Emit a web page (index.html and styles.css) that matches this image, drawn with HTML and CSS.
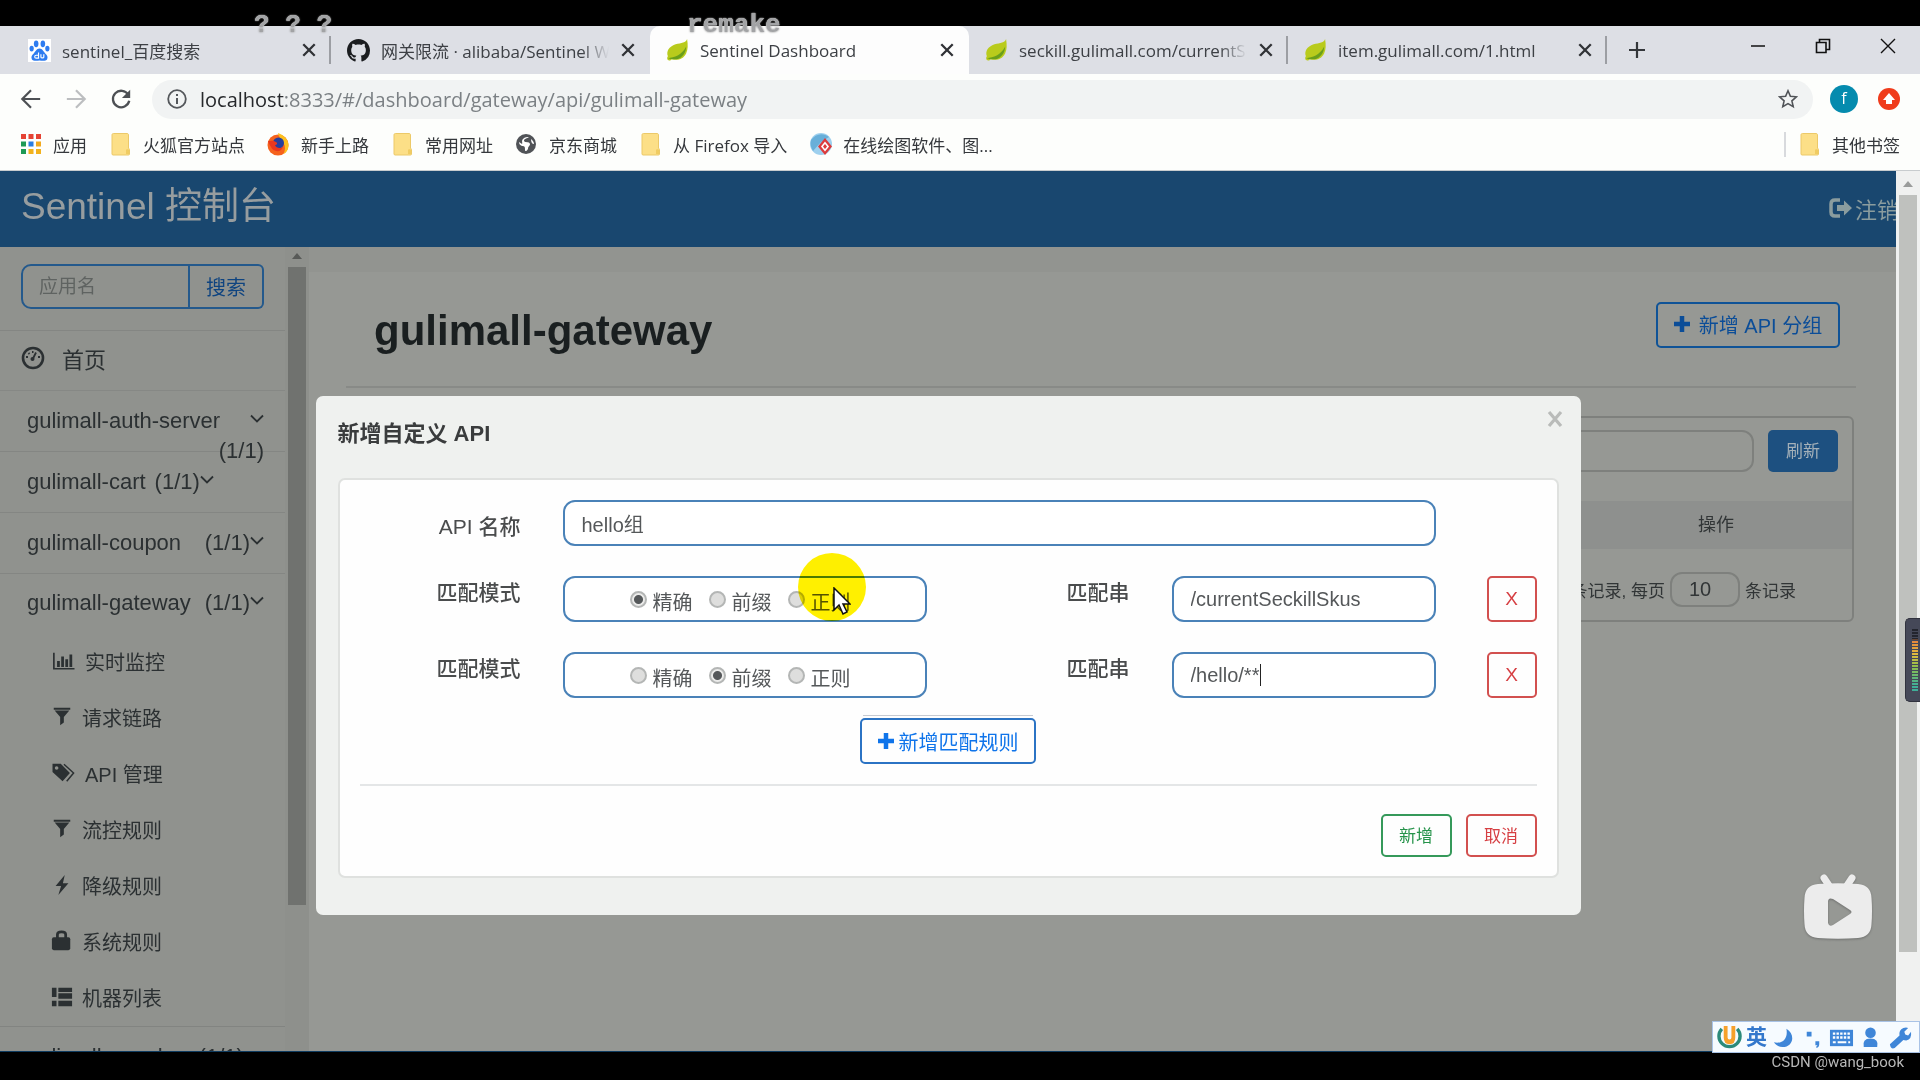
FILE: index.html
```html
<!DOCTYPE html>
<html lang="zh-CN">
<head>
  <meta charset="UTF-8" />
  <title>Sentinel Dashboard</title>
  <link rel="stylesheet" href="styles.css">
</head>
<body>

  <!-- shared icons -->
  <svg class="sprite" aria-hidden="true">
    <symbol id="leaf" viewBox="0 0 24 24">
      <path d="M22 0c-1 4-6 4-12 5.500C3 8 0 13 2 18c-1 1-1 3 0 4 1 .8 3 .6 4-1 6 2 12 0 15-6 2-4 2-9 1-15z" fill="#b9cb1c"/>
      <path d="M2 20c7-1 14-3 19-12 0 6-4 12-10 13-4 .6-7-.5-9-1z" fill="#6a9f1b"/>
    </symbol>
    <symbol id="folder" viewBox="0 0 24 24">
      <path d="M3 3c0-1 .5-1.500 1.500-1.500H18c1 0 1.500.5 1.500 1.500v13l1 1.500V22c0 .6-.4 1-1 1H4c-.6 0-1-.4-1-1z" fill="#fcdf87" stroke="#ecc968"/>
      <path d="M17 22v-4c0-1 3-1 3 0v4z" fill="#f0cc62"/>
    </symbol>
    <symbol id="cross" viewBox="0 0 14 14">
      <path d="M2 2l10 10M12 2L2 12" stroke="currentColor" stroke-width="2" fill="none"/>
    </symbol>
    <symbol id="chevron" viewBox="0 0 14 10">
      <path d="M1 1.500l6 6 6-6" stroke="currentColor" stroke-width="1.800" fill="none"/>
    </symbol>
    <symbol id="plus" viewBox="0 0 16 16">
      <path d="M8 0v16M0 8h16" stroke="currentColor" stroke-width="4.500"/>
    </symbol>
    <symbol id="filter" viewBox="0 0 24 24">
      <path d="M3 2h18v2H3zM4 5h16l-6 7v6l-4 3v-9z" fill="currentColor"/>
    </symbol>
  </svg>

  <div class="window">
    <div class="tab-strip">
      <div class="tab">
        <svg class="favicon" viewBox="0 0 24 24"><path fill="#fff" d="M0 0h24v24H0z"/><g fill="#2e7cf0"><ellipse cx="8.500" cy="5" rx="2.400" ry="3.500"/><ellipse cx="15.500" cy="5" rx="2.400" ry="3.500"/><ellipse cx="3.800" cy="10" rx="2.200" ry="3"/><ellipse cx="20.200" cy="10" rx="2.200" ry="3"/><path d="M12 10c-3 0-4 3-6 5s-3 3-2 6c1 2 4 2 8 1.500 4 .5 7 .5 8-1.500 1-3 0-4-2-6s-3-5-6-5z"/></g><path d="M11 14v6H8.500a1.500 1.500 0 010-3H11M13.500 16v3c0 1 3 1 3 0v-3" stroke="#fff" stroke-width="1.200" fill="none"/></svg>
        <span class="tab-title">sentinel_百度搜索</span>
        <button class="tab-close" aria-label="关闭"><svg><use href="#cross"/></svg></button>
      </div>
      <div class="tab before-active">
        <svg class="favicon" viewBox="0 0 16 16"><path d="M8 0C3.580 0 0 3.580 0 8c0 3.540 2.290 6.530 5.470 7.590.4.070.55-.17.55-.38 0-.19-.01-.82-.01-1.490-2.010.37-2.530-.49-2.690-.94-.09-.23-.48-.94-.82-1.130-.28-.15-.68-.52-.01-.53.63-.01 1.080.58 1.230.82.72 1.210 1.870.87 2.330.66.070-.52.28-.87.51-1.070-1.780-.2-3.640-.89-3.640-3.950 0-.87.31-1.590.82-2.150-.08-.2-.36-1.020.08-2.120 0 0 .67-.21 2.200.82.64-.18 1.320-.27 2-.27s1.360.09 2 .27c1.530-1.040 2.200-.82 2.200-.82.44 1.100.16 1.920.08 2.120.51.56.82 1.270.82 2.150 0 3.070-1.870 3.750-3.650 3.950.29.25.54.73.54 1.480 0 1.070-.01 1.930-.01 2.200 0 .21.15.46.55.38A8.010 8.010 0 0016 8c0-4.420-3.580-8-8-8z" fill="#1b1d20"/></svg>
        <span class="tab-title faded">网关限流 · alibaba/Sentinel Wiki</span>
        <button class="tab-close" aria-label="关闭"><svg><use href="#cross"/></svg></button>
      </div>
      <div class="tab active">
        <svg class="favicon"><use href="#leaf"/></svg>
        <span class="tab-title">Sentinel Dashboard</span>
        <button class="tab-close" aria-label="关闭"><svg><use href="#cross"/></svg></button>
      </div>
      <div class="tab">
        <svg class="favicon"><use href="#leaf"/></svg>
        <span class="tab-title faded">seckill.gulimall.com/currentSeckillSkus</span>
        <button class="tab-close" aria-label="关闭"><svg><use href="#cross"/></svg></button>
      </div>
      <div class="tab">
        <svg class="favicon"><use href="#leaf"/></svg>
        <span class="tab-title">item.gulimall.com/1.html</span>
        <button class="tab-close" aria-label="关闭"><svg><use href="#cross"/></svg></button>
      </div>
      <button class="new-tab" aria-label="新标签页"><svg viewBox="0 0 18 18"><path d="M9 1v16M1 9h16" stroke="#33363a" stroke-width="2.200"/></svg></button>
      <div class="window-controls">
        <button aria-label="最小化"><svg viewBox="0 0 16 16"><path d="M1 8h14" stroke="#111" stroke-width="1.500"/></svg></button>
        <button aria-label="还原"><svg viewBox="0 0 16 16"><path d="M1.500 4.500h9.500v10H1.500zM4.500 4V1.500h10v10H11.500" stroke="#111" stroke-width="1.600" fill="none"/></svg></button>
        <button aria-label="关闭窗口"><svg viewBox="0 0 16 16"><path d="M1 1l14 14M15 1L1 15" stroke="#111" stroke-width="1.400"/></svg></button>
      </div>
    </div>

    <div class="toolbar">
      <button class="nav-btn" aria-label="后退"><svg viewBox="0 0 24 24"><path d="M22 12H3M12 2.500L2.500 12l9.500 9.500" stroke="#4d5054" stroke-width="2.400" fill="none"/></svg></button>
      <button class="nav-btn" aria-label="前进"><svg viewBox="0 0 24 24"><path d="M2 12h19M12 2.500l9.500 9.500-9.500 9.500" stroke="#bcbec0" stroke-width="2.400" fill="none"/></svg></button>
      <button class="nav-btn" aria-label="重新加载"><svg viewBox="0 0 24 24"><path d="M20 7.500A9 9 0 1021 14" stroke="#4d5054" stroke-width="2.500" fill="none"/><path d="M22 2v9h-9z" fill="#4d5054"/></svg></button>
      <div class="address-bar">
        <svg class="info-icon" viewBox="0 0 20 20"><circle cx="10" cy="10" r="8.800" stroke="#54575b" stroke-width="1.800" fill="none"/><path d="M10 9v6M10 5v2" stroke="#54575b" stroke-width="2"/></svg>
        <span class="url"><b>localhost</b>:8333/#/dashboard/gateway/api/gulimall-gateway</span>
        <svg class="star-icon" viewBox="0 0 20 20"><path d="M10 1.800l2.400 5.500 6 .5-4.500 4 1.300 5.900-5.200-3.100-5.200 3.100 1.300-5.900-4.500-4 6-.5z" stroke="#505357" stroke-width="1.600" fill="none"/></svg>
      </div>
      <span class="avatar">f</span>
      <svg class="update-icon" viewBox="0 0 22 22"><circle cx="11" cy="11" r="11" fill="#f03c1c"/><path d="M11 5l6 7h-3v4H8v-4H5z" fill="#fff"/></svg>
    </div>

    <div class="bookmarks">
      <a href="#"><svg viewBox="0 0 24 24"><path d="M2 2h5v5H2zM9.500 2h5v5h-5zM17 2h5v5h-5z" fill="#e54334"/><path d="M2 9.500h5v5H2z" fill="#1d9a56"/><path d="M9.500 9.500h5v5h-5z" fill="#2a7de1"/><path d="M17 9.500h5v5h-5z" fill="#f2a91d"/><path d="M2 17h5v5H2z" fill="#1d9a56"/><path d="M9.500 17h5v5h-5zM17 17h5v5h-5z" fill="#f2b21d"/></svg>应用</a>
      <a href="#"><svg><use href="#folder"/></svg>火狐官方站点</a>
      <a href="#"><svg viewBox="0 0 24 24"><circle cx="11" cy="13" r="10.500" fill="#f5621d"/><path d="M11 1c6 2 11 7 10.500 13-.5 5-3 7-5 8 2-4 2-8 0-11-1-4-5-5-5.500-10z" fill="#fdbf1c"/><circle cx="11.500" cy="11" r="5.500" fill="#263f9c"/><path d="M1 9c3 0 5-1 8 1 2 1 1 3-1 3 1 3 5 4 8 2-2 6-10 5-12 0-1-2-2-3-3-6z" fill="#e8381e"/></svg>新手上路</a>
      <a href="#"><svg><use href="#folder"/></svg>常用网址</a>
      <a href="#"><svg viewBox="0 0 24 24"><circle cx="11" cy="12" r="10" fill="#505357"/><path d="M14 5c-2 2-5 1-5 4 1 2 5 0 6 3 0 2-2 2-2 5-1 2-3 3-3 1 0-3 0-4-3-4-2-1-3-2-3-4l3 2c1-1-1-3 1-5s4-2 6-2zM16 7c2 2 3 3 3 5-2 0-3-2-3-5z" fill="#fff"/></svg>京东商城</a>
      <a href="#"><svg><use href="#folder"/></svg>从 Firefox 导入</a>
      <a href="#"><svg viewBox="0 0 24 24"><circle cx="12" cy="12" r="11" fill="#9ed0ee"/><path d="M2 8c4-6 12-8 18-3l-8 5-8 9c-2-3-3-7-2-11z" fill="#68afd9"/><path d="M16 6l7 8.500-7 8.500-7-8.500z" fill="#dc3b3b"/><path d="M16 9.500l4 5-4 5-4-5z" fill="#fff"/><path d="M16 12l2 2.500-2 2.500-2-2.500z" fill="#dc3b3b"/></svg>在线绘图软件、图...</a>
      <a href="#" class="other-bookmarks"><svg><use href="#folder"/></svg>其他书签</a>
    </div>

    <div class="viewport">
      <div class="page">
        <header class="navbar">
          <a href="#" class="brand">Sentinel 控制台</a>
          <a href="#" class="logout"><svg viewBox="0 0 24 20"><path d="M11 2H6Q2 2 2 6v8q0 4 4 4h5" stroke="currentColor" stroke-width="3.500" fill="none"/><path d="M8 7h7V2.500L23 10l-8 7.500V13H8z" fill="currentColor"/></svg><span>注销</span></a>
        </header>

        <div class="layout">
          <aside class="sidebar">
            <nav class="menu">
              <form class="app-search">
                <input type="text" placeholder="应用名" aria-label="应用名">
                <button type="button">搜索</button>
              </form>
              <a href="#" class="menu-home">
                <svg viewBox="0 0 24 24"><circle cx="12" cy="12" r="10" stroke="currentColor" stroke-width="2.600" fill="none"/><path d="M11.500 13.500L15 6.500" stroke="currentColor" stroke-width="1.800"/><circle cx="11.500" cy="13" r="2" fill="currentColor"/><path d="M5 11h2M17 11h2M7.500 7l1 1M11 6h1.500" stroke="currentColor" stroke-width="1.800"/></svg>
                首页
              </a>
              <a href="#" class="menu-app wrapped"><span class="name">gulimall-auth-server</span><svg class="chevron"><use href="#chevron"/></svg><span class="count">(1/1)</span></a>
              <a href="#" class="menu-app packed"><span class="name">gulimall-cart</span><span class="count">(1/1)</span><svg class="chevron"><use href="#chevron"/></svg></a>
              <a href="#" class="menu-app"><span class="name">gulimall-coupon</span><span class="count">(1/1)</span><svg class="chevron"><use href="#chevron"/></svg></a>
              <a href="#" class="menu-app open"><span class="name">gulimall-gateway</span><span class="count">(1/1)</span><svg class="chevron"><use href="#chevron"/></svg></a>
              <ul class="submenu">
                <li><a href="#"><svg class="wide" viewBox="0 0 24 24"><path d="M1.500 3v17.500H24" stroke="currentColor" stroke-width="1.800" fill="none"/><path d="M5 12h3v6.500H5zM9.500 7h3v11.500h-3zM14 10h3v8.500h-3zM18.500 5h3v13.500h-3z" fill="currentColor"/></svg>实时监控</a></li>
                <li><a href="#"><svg><use href="#filter"/></svg>请求链路</a></li>
                <li><a href="#"><svg class="wide" viewBox="0 0 24 24"><path fill-rule="evenodd" d="M0 2h9l10 10-8 9L0 11zM4.500 4.500a2 2 0 100 4 2 2 0 000-4z" fill="currentColor"/><path d="M12.500 2.500L23 12l-7.500 9" stroke="currentColor" stroke-width="1.600" fill="none"/></svg>API 管理</a></li>
                <li><a href="#"><svg><use href="#filter"/></svg>流控规则</a></li>
                <li><a href="#"><svg viewBox="0 0 24 24"><path d="M15 1L5 13h6L8 23l11-13h-6z" fill="currentColor"/></svg>降级规则</a></li>
                <li><a href="#"><svg viewBox="0 0 24 24"><path d="M7 10V5q0-3 4.500-3T16 5v5" stroke="currentColor" stroke-width="3" fill="none"/><rect x="1" y="8" width="20" height="14" rx="2" fill="currentColor"/></svg>系统规则</a></li>
                <li><a href="#"><svg viewBox="0 0 24 24"><path d="M1 2h5v10H1zM8 2h15v4.500H8zM8 8h15v6H8zM1 16h5v6H1zM8 16h15v6H8z" fill="currentColor"/></svg>机器列表</a></li>
              </ul>
              <a href="#" class="menu-app packed"><span class="name">gulimall-member</span><span class="count">(1/1)</span></a>
            </nav>
            <div class="scrollbar scrollbar-dim"><i></i><div class="thumb"></div></div>
          </aside>

          <main class="content">
            <div class="content-strip"></div>
            <div class="content-head">
              <h1>gulimall-gateway</h1>
              <button type="button" class="btn-new"><svg><use href="#plus"/></svg>新增 API 分组</button>
            </div>
            <section class="panel">
              <div class="panel-tools">
                <input type="text" aria-label="关键字">
                <button type="button">刷新</button>
              </div>
              <table>
                <thead>
                  <tr><th>API 名称</th><th class="col-action">操作</th></tr>
                </thead>
              </table>
              <div class="pager">
                <label for="page-size">条记录, 每页</label>
                <input type="text" id="page-size" value="10">
                <span>条记录</span>
              </div>
            </section>
          </main>
        </div>

        <div class="dialog-layer">
          <div class="dialog" role="dialog" aria-labelledby="dialog-title">
            <button type="button" class="dialog-close" aria-label="关闭"><svg viewBox="0 0 16 18"><path d="M2 2l12 14M14 2L2 16" stroke="currentColor" stroke-width="3.200"/></svg></button>
            <h2 id="dialog-title">新增自定义 API</h2>
            <form class="card">
              <div class="fields">
                <label for="api-name" class="name-label">API 名称</label>
                <input type="text" id="api-name" class="field name-field" value="hello组">

                <span class="rule-label mode-label">匹配模式</span>
                <div class="field modes">
                  <label><input type="radio" name="mode1" checked>精确</label>
                  <label><input type="radio" name="mode1">前缀</label>
                  <label><input type="radio" name="mode1">正则</label>
                </div>
                <label for="pattern1" class="rule-label">匹配串</label>
                <input type="text" id="pattern1" class="field" value="/currentSeckillSkus">
                <button type="button" class="btn-remove">X</button>

                <span class="rule-label mode-label">匹配模式</span>
                <div class="field modes">
                  <label><input type="radio" name="mode2">精确</label>
                  <label><input type="radio" name="mode2" checked>前缀</label>
                  <label><input type="radio" name="mode2">正则</label>
                </div>
                <label for="pattern2" class="rule-label">匹配串</label>
                <div class="caret-wrap">
                  <input type="text" id="pattern2" class="field" value="/hello/**">
                  <i class="caret"></i>
                </div>
                <button type="button" class="btn-remove">X</button>
              </div>
              <div class="add-rule">
                <button type="button"><svg><use href="#plus"/></svg>新增匹配规则</button>
              </div>
              <hr>
              <div class="actions">
                <button type="button" class="btn-save">新增</button>
                <button type="button" class="btn-cancel">取消</button>
              </div>
            </form>
          </div>
        </div>
      </div>
      <div class="scrollbar scrollbar-page"><i></i><div class="thumb"></div></div>
    </div>
  </div>

  <!-- things floating over the window -->
  <span class="danmaku danmaku-left">? ? ?</span>
  <span class="danmaku danmaku-mid">remake</span>

  <div class="click-halo"></div>
  <svg class="cursor" viewBox="0 0 18 28"><path d="M1 1v22l5-5 4 9 4-2-4-8h7z" fill="#fff" stroke="#111" stroke-width="1.500"/></svg>

  <div class="meter"><div class="meter-bars"></div></div>

  <svg class="player-logo" viewBox="0 0 68 66"><path d="M20 4l6 9M48 4l-6 9" stroke="#ececec" stroke-width="7" stroke-linecap="round"/><path fill-rule="evenodd" d="M14 10Q34 8.500 54 10 67 11 67.500 24q1 13 0 26Q67 63 54 64q-20 1.500-40 0Q1 63 .5 50q-1-13 0-26Q1 11 14 10zM24 28v21q1 4 5 2l17-11q3-2 0-4L29 25q-5-2-5 3z" fill="#ececec"/></svg>

  <div class="ime">
    <svg viewBox="0 0 26 26"><path d="M5 4a11 11 0 1016 0" stroke="#2c8a7a" stroke-width="3.500" fill="none"/><path d="M7 1v12q0 7 6 7t6-7V1h-4v12q0 2-2 2t-2-2V1z" fill="#f7a12b"/></svg>
    <b>英</b>
    <svg viewBox="0 0 26 26"><path d="M16 4c10 6 7 19-4 19-4 0-7-2-9-5 9 2 15-4 13-14z" fill="#3f86d8"/></svg>
    <svg viewBox="0 0 26 26"><path d="M7 7h5v5H7zM16 17h4v3q0 3-3 4v-2q1 0 1-1h-2z" fill="#3f86d8"/></svg>
    <svg viewBox="0 0 26 26"><path d="M1 5h24v17H1z" fill="#3f86d8"/><path d="M4 9h18M4 13h18" stroke="#fff" stroke-width="2.500" stroke-dasharray="2.500 1.300"/><path d="M4 18h3M9 18h9M20 18h2" stroke="#fff" stroke-width="2"/></svg>
    <svg viewBox="0 0 26 26"><circle cx="13" cy="8" r="5.500" fill="#3f86d8"/><path d="M6 23q-2-9 7-9t7 9z" fill="#3f86d8"/></svg>
    <svg viewBox="0 0 26 26"><path d="M3 20l10-9q-1-6 4-8 3-1 5 0l-4 4 1 3 3 1 3-4q1 8-5 9-2 0-3-.5L8 24q-4 2-5-4z" fill="#3f86d8"/></svg>
  </div>
  <span class="watermark">CSDN @wang_book</span>

</body>
</html>
```
FILE: styles.css
```css
* {
  box-sizing: border-box;
}
body {
  margin: 0;
  background: #000;
  font-family: "Liberation Sans", "Noto Sans CJK SC", sans-serif;
  overflow: hidden;
}
button, input {
  font-family: inherit;
  margin: 0;
}
button {
  background: none;
  border: none;
  padding: 0;
  display: flex;
  align-items: center;
  justify-content: center;
}
a {
  color: inherit;
  text-decoration: none;
}
svg {
  flex: none;
}
.sprite {
  position: absolute;
  width: 0;
  height: 0;
}

/* browser window */
.window {
  height: 100vh;
  padding: 26px 0 28px;
  display: flex;
  flex-direction: column;
}
.tab-strip, .toolbar, .bookmarks {
  font-family: "Open Sans", "Noto Sans CJK SC", sans-serif;
  display: flex;
  align-items: center;
  flex: none;
}
.tab-strip {
  height: 48px;
  padding-left: 12px;
  background: #dddfe5;
}
.tab {
  flex: 0 1 319px;
  min-width: 0;
  height: 48px;
  padding: 0 14px 0 16px;
  display: flex;
  align-items: center;
  gap: 11px;
  position: relative;
  font-size: 17px;
  color: #3d4045;
}
.tab::after {
  content: "";
  position: absolute;
  right: 0;
  top: 10px;
  height: 28px;
  width: 2px;
  background: #9c9ea3;
}
.tab.active {
  background: #fdfdfd;
  border-radius: 10px 10px 0 0;
}
.tab.active::after, .tab.before-active::after {
  display: none;
}
.favicon {
  width: 23px;
  height: 23px;
}
.tab-title {
  flex: 1;
  overflow: hidden;
  white-space: nowrap;
}
.tab-title.faded {
  -webkit-mask-image: linear-gradient(to right, #000 88%, transparent);
  mask-image: linear-gradient(to right, #000 88%, transparent);
}
.tab-close svg {
  width: 16px;
  height: 16px;
  color: #303236;
}
.new-tab {
  width: 60px;
}
.new-tab svg {
  width: 18px;
  height: 18px;
}
.window-controls {
  margin-left: auto;
  align-self: flex-start;
  display: flex;
}
.window-controls button {
  width: 65px;
  height: 40px;
}
.window-controls svg {
  width: 16px;
  height: 16px;
}
.toolbar {
  height: 50px;
  padding: 0 20px 0 8px;
  background: #fdfefc;
}
.nav-btn {
  width: 45px;
}
.nav-btn svg {
  width: 22px;
  height: 22px;
}
.address-bar {
  flex: 1;
  height: 39px;
  margin: 0 17px 0 9px;
  padding: 0 15px;
  display: flex;
  align-items: center;
  gap: 13px;
  border-radius: 20px;
  background: #f1f3f3;
}
.info-icon, .star-icon {
  width: 20px;
  height: 20px;
}
.url {
  flex: 1;
  font-size: 20px;
  color: #7b8084;
}
.url b {
  font-weight: normal;
  color: #26282b;
}
.avatar {
  width: 28px;
  height: 28px;
  margin-right: 20px;
  border-radius: 50%;
  background: #058bae;
  color: #fff;
  font-size: 16px;
  line-height: 27px;
  text-align: center;
}
.update-icon {
  width: 22px;
  height: 22px;
}
.bookmarks {
  height: 47px;
  padding: 0 20px 6px 19px;
  gap: 22px;
  background: #fdfefc;
  border-bottom: 1px solid #c8ccce;
  font-size: 17px;
  color: #35383c;
}
.bookmarks a {
  display: flex;
  align-items: center;
  gap: 10px;
  white-space: nowrap;
}
.bookmarks svg {
  width: 24px;
  height: 24px;
}
.bookmarks .other-bookmarks {
  margin-left: auto;
  padding-left: 12px;
  border-left: 2px solid #d8dadd;
}

/* page */
.viewport {
  flex: 1;
  min-height: 0;
  display: flex;
  background: #969894;
  border-bottom: 1px solid #0f3c60;
}
.page {
  flex: 1;
  min-width: 0;
  display: flex;
  flex-direction: column;
  position: relative;
  overflow: hidden;
}
.navbar {
  flex: none;
  height: 76px;
  padding-left: 21px;
  display: flex;
  align-items: center;
  justify-content: space-between;
  background: #19476f;
  color: #979d9f;
}
.brand {
  font-size: 37px;
  line-height: 46px;
  padding-bottom: 4px;
}
.logout {
  width: 67px;
  padding-bottom: 2px;
  display: flex;
  align-items: center;
  gap: 2px;
  font-size: 22px;
  white-space: nowrap;
  color: #8a9c9e;
}
.logout svg {
  width: 24px;
  height: 20px;
}
.layout {
  flex: 1;
  min-height: 0;
  display: flex;
}
.scrollbar {
  flex: none;
  width: 24px;
  display: flex;
  flex-direction: column;
  align-items: center;
}
.scrollbar i {
  flex: none;
  width: 0;
  border: 5px solid transparent;
  border-top-width: 0;
  border-bottom: 6px solid;
}
.thumb {
  width: 18px;
}
.scrollbar-page {
  background: #f0f1f0;
  padding-top: 10px;
}
.scrollbar-page i {
  border-bottom-color: #9a9c9b;
}
.scrollbar-page .thumb {
  margin-top: 8px;
  height: 87%;
  background: #bfc1be;
}
.scrollbar-dim {
  background: #8e908c;
  padding-top: 6px;
}
.scrollbar-dim i {
  border-bottom-color: #585a58;
}
.scrollbar-dim .thumb {
  margin-top: 8px;
  height: 80%;
  background: #70726f;
}

/* sidebar */
.sidebar {
  flex: none;
  width: 309px;
  display: flex;
  background: #90928e;
  color: #2b3032;
}
.menu {
  flex: 1;
  overflow: hidden;
}
.app-search {
  display: flex;
  padding: 17px 21px 21px;
  border-bottom: 1px solid #848683;
}
.app-search input {
  width: 169px;
  height: 45px;
  padding: 0 0 0 16px;
  border: 2px solid #24598c;
  border-radius: 10px 0 0 10px;
  background: none;
  font-size: 19px;
}
.app-search input::placeholder {
  color: #5f6361;
}
.app-search button {
  flex: 1;
  height: 45px;
  border: 2px solid #24598c;
  border-left: none;
  border-radius: 0 6px 6px 0;
  font-size: 20px;
  color: #0f4480;
}
.menu-home {
  height: 60px;
  padding: 0 21px 5px;
  display: flex;
  align-items: center;
  gap: 17px;
  border-bottom: 1px solid #868885;
  font-size: 22px;
}
.menu-home svg {
  width: 24px;
  height: 24px;
}
.menu-app {
  height: 61px;
  padding: 0 21px 1px 27px;
  display: flex;
  align-items: center;
  border-bottom: 1px solid #848683;
  font-size: 22px;
  line-height: 30px;
}
.menu-app .count {
  margin-left: auto;
}
.menu-app .chevron {
  width: 14px;
  height: 10px;
  margin-bottom: 4px;
}
.menu-app.packed .count {
  margin-left: 9px;
}
.menu-app.wrapped {
  flex-wrap: wrap;
  align-content: flex-start;
  padding-top: 15px;
}
.menu-app.wrapped .chevron {
  margin-left: auto;
}
.menu-app.open {
  height: 59px;
  border-bottom: none;
}
.submenu {
  margin: 0;
  padding: 0 0 1px;
  list-style: none;
  border-bottom: 1px solid #828481;
}
.submenu a {
  height: 56px;
  padding-left: 51px;
  display: flex;
  align-items: center;
  gap: 9px;
  font-size: 20px;
}
.submenu svg {
  width: 22px;
  height: 22px;
}
.submenu .wide {
  width: 25px;
}

/* main area */
.content {
  flex: 1;
  min-width: 0;
}
.content-strip {
  height: 25px;
  background: #929490;
}
.content-head {
  height: 116px;
  margin: 0 40px 0 37px;
  padding: 30px 16px 0 28px;
  display: flex;
  align-items: flex-start;
  justify-content: space-between;
  border-bottom: 2px solid #888a87;
}
.content-head h1 {
  margin: 0;
  font-size: 42px;
  line-height: 58px;
  color: #1a1f20;
}
.btn-new {
  width: 184px;
  height: 46px;
  border: 2px solid #0f5397;
  border-radius: 5px;
  gap: 9px;
  font-size: 20px;
  padding-bottom: 2px;
  color: #0b4d98;
}
.btn-new svg {
  width: 16px;
  height: 16px;
}
.panel {
  margin: 28px 42px 0 37px;
  border: 2px solid #7e807d;
  border-radius: 6px;
  color: #313536;
}
.panel-tools {
  display: flex;
  gap: 14px;
  padding: 12px 14px 0;
}
.panel-tools input {
  flex: 1;
  height: 42px;
  border: 2px solid #7e807d;
  border-radius: 12px;
  background: none;
}
.panel-tools button {
  width: 70px;
  height: 42px;
  padding-bottom: 3px;
  border-radius: 5px;
  background: #1d5080;
  color: #a5b1b9;
  font-size: 17px;
}
.panel table {
  width: 100%;
  margin-top: 29px;
  border-collapse: collapse;
  background: #8e908e;
}
.panel th {
  height: 48px;
  padding: 0 0 4px;
  font-size: 18px;
  font-weight: normal;
}
.col-action {
  width: 272px;
}
.pager {
  display: flex;
  align-items: center;
  justify-content: flex-end;
  gap: 5px;
  padding: 23px 56px 13px 0;
  font-size: 17px;
}
.pager input {
  width: 70px;
  height: 35px;
  padding: 0 0 0 17px;
  border: 2px solid #7e807d;
  border-radius: 12px;
  background: none;
  color: #313536;
  font-size: 20px;
}

/* dialog */
.dialog-layer {
  position: absolute;
  inset: 0;
  padding-top: 225px;
  display: flex;
  align-items: flex-start;
  justify-content: center;
}
.dialog {
  position: relative;
  width: 1265px;
  padding: 0 22px 37px;
  border-radius: 7px;
  background: #eff1ef;
}
.dialog h2 {
  margin: 0;
  font-size: 22px;
  font-weight: bold;
  line-height: 76px;
  padding-bottom: 6px;
  color: #3a3c3d;
}
.dialog-close {
  position: absolute;
  right: 18px;
  top: 14px;
  color: #b9bbb9;
}
.dialog-close svg {
  width: 16px;
  height: 18px;
}
.card {
  padding: 20px 20px 19px;
  border: 2px solid #dfe1df;
  border-radius: 7px;
  background: #fefefe;
  color: #4a4c4d;
}
.fields {
  display: grid;
  grid-template-columns: 161px 364fr 161px 264fr 59px;
  column-gap: 42px;
  row-gap: 30px;
}
.name-label, .rule-label {
  text-align: right;
  font-size: 21px;
  font-weight: 500;
  line-height: 34px;
}
.name-label {
  line-height: 54px;
  height: 46px;
}
.mode-label {
  grid-column: 1;
}
.field {
  width: 100%;
  height: 46px;
  padding: 0 17px;
  border: 2px solid #4a82b8;
  border-radius: 12px;
  background: #fff;
  color: #55585a;
  font-size: 20px;
}
.name-field {
  grid-column: 2 / 5;
}
.modes {
  display: flex;
  align-items: center;
  justify-content: center;
  gap: 16px;
  padding: 4px 9px 0 0;
}
.modes label {
  display: flex;
  align-items: center;
  gap: 6px;
  white-space: nowrap;
}
.modes input {
  appearance: none;
  width: 17px;
  height: 17px;
  margin-bottom: 4px;
  border: 2px solid #b4b6b5;
  border-radius: 50%;
  background: #dededd;
}
.modes input:checked {
  background: radial-gradient(circle, #55585a 0 4px, #ebebea 5px);
}
.caret-wrap {
  position: relative;
}
.caret {
  position: absolute;
  left: 88px;
  top: 12px;
  width: 1px;
  height: 22px;
  background: #222;
}
.btn-remove, .btn-cancel {
  border: 2px solid #d2504f;
  border-radius: 5px;
  color: #d63f43;
}
.btn-remove {
  justify-self: end;
  width: 50px;
  height: 46px;
  font-size: 19px;
}
.add-rule {
  width: 170px;
  margin: 17px auto 0;
  padding-top: 2px;
  border-top: 1px solid #c6cad2;
  display: flex;
  justify-content: center;
}
.add-rule button {
  flex: none;
  width: 176px;
  height: 46px;
  border: 2px solid #2b73c4;
  border-radius: 5px;
  gap: 5px;
  font-size: 20px;
  color: #0f74ea;
}
.add-rule svg {
  width: 16px;
  height: 16px;
}
.card hr {
  margin: 20px 0 28px;
  border: none;
  border-top: 2px solid #e4e6e7;
}
.actions {
  display: flex;
  justify-content: flex-end;
  gap: 14px;
}
.actions button {
  width: 71px;
  height: 43px;
  padding-bottom: 2px;
  font-size: 17px;
}
.btn-save {
  border: 2px solid #35995a;
  border-radius: 5px;
  color: #25934a;
}

/* overlays */
.danmaku {
  position: absolute;
  top: 10px;
  font: bold 26px/30px "Liberation Mono", monospace;
  color: #a2a3a5;
  text-shadow: 0 0 1px #fff, 0 0 2px #666;
}
.danmaku-left {
  left: 254px;
}
.danmaku-mid {
  left: 687px;
}
.click-halo {
  position: absolute;
  left: 798px;
  top: 553px;
  width: 68px;
  height: 68px;
  border-radius: 50%;
  background: #fff000;
  mix-blend-mode: multiply;
}
.cursor {
  position: absolute;
  left: 833px;
  top: 587px;
  width: 18px;
  height: 28px;
}
.meter {
  position: absolute;
  right: 0;
  top: 618px;
  width: 15px;
  height: 84px;
  padding: 10px 2px 9px 6px;
  border-radius: 5px 0 0 5px;
  background: #454858;
  border: 1px solid #30323e;
  border-right: none;
}
.meter-bars {
  height: 100%;
  background:
    repeating-linear-gradient(transparent 0 2px, #454858 2px 3px),
    linear-gradient(#23252e 0 16%, #e8843c 18%, #e0bb3e 40%, #8fc04c 60%, #3fae98 90%);
}
.player-logo {
  position: absolute;
  right: 48px;
  top: 874px;
  width: 68px;
  height: 66px;
  filter: drop-shadow(0 1px 1px #5559);
}
.ime {
  position: absolute;
  right: 0;
  bottom: 27px;
  width: 208px;
  height: 32px;
  padding: 0 7px 0 4px;
  display: flex;
  align-items: center;
  justify-content: space-between;
  border: 1px solid #a9c3e6;
  background: #f6fbff;
}
.ime svg {
  width: 25px;
  height: 25px;
}
.ime b {
  font-size: 21px;
  line-height: 28px;
  color: #3478cc;
}
.watermark {
  position: absolute;
  right: 16px;
  bottom: 6px;
  font: 15px/24px Roboto, sans-serif;
  color: #b8b8b8;
}
```
